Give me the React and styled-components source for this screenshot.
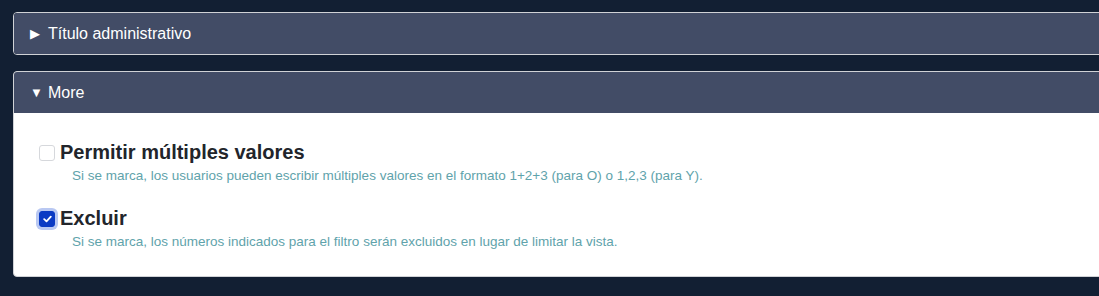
import React, { useState } from 'react';
import styled, { createGlobalStyle } from 'styled-components';

const GlobalStyle = createGlobalStyle`
  html, body {
    margin: 0;
    padding: 0;
    background-color: #121f33;
    overflow: hidden;
  }
  body {
    font-family: "Liberation Sans", Arial, sans-serif;
  }
`;

const Page = styled.div`
  padding: 12px 0 0 13px;
  display: flex;
  flex-direction: column;
  gap: 16px;
`;

const Panel = styled.details`
  width: 1100px;
  border: 1px solid #d0d2d6;
  border-radius: 4px;
  background-color: #ffffff;
  overflow: hidden;
`;

const Summary = styled.summary`
  list-style: none;
  display: flex;
  align-items: center;
  gap: 6px;
  height: 41px;
  padding: 0 0 0 16px;
  background-color: #424c66;
  color: #ffffff;
  font-size: 16px;
  cursor: pointer;

  &::-webkit-details-marker {
    display: none;
  }
`;

const Arrow = styled.span`
  font-size: 13px;
  width: 12px;
`;

const Body = styled.div`
  padding: 28px 24px 27px 24px;
  display: flex;
  flex-direction: column;
  gap: 24px;
`;

const Option = styled.div`
  display: flex;
  flex-direction: column;
`;

const OptionRow = styled.label`
  display: flex;
  align-items: center;
  gap: 5px;
  cursor: pointer;
`;

const Box = styled.span`
  box-sizing: border-box;
  width: 16px;
  height: 16px;
  margin-left: 1px;
  border-radius: 3px;
  border: 1px solid ${p => (p.checked ? '#0a3ac4' : '#d6d8dc')};
  background-color: ${p => (p.checked ? '#0a3ac4' : '#ffffff')};
  box-shadow: ${p => (p.checked ? '0 0 0 3px #b9c8f2' : 'none')};
  display: flex;
  align-items: center;
  justify-content: center;
`;

const Label = styled.span`
  font-size: 20px;
  font-weight: bold;
  color: #22252b;
`;

const Help = styled.div`
  margin: 4px 0 0 34px;
  font-size: 13.5px;
  color: #5fa3ab;
`;

const options = [
  {
    label: 'Permitir múltiples valores',
    help: 'Si se marca, los usuarios pueden escribir múltiples valores en el formato 1+2+3 (para O) o 1,2,3 (para Y).',
    checked: false,
  },
  {
    label: 'Excluir',
    help: 'Si se marca, los números indicados para el filtro serán excluidos en lugar de limitar la vista.',
    checked: true,
  },
];

const Check = () => (
  <svg width="9" height="8" viewBox="0 0 9 8">
    <path d="M1.2 4.2 L3.5 6.3 L7.8 1.6" fill="none" stroke="#ffffff" strokeWidth="1.8" strokeLinecap="round" strokeLinejoin="round" />
  </svg>
);

export default function App() {
  const [values, setValues] = useState(options.map(o => o.checked));

  const toggle = i => {
    const next = [...values];
    next[i] = !next[i];
    setValues(next);
  };

  return (
    <>
      <GlobalStyle />
      <Page>
        <Panel>
          <Summary>
            <Arrow>▶</Arrow>
            Título administrativo
          </Summary>
        </Panel>
        <Panel open>
          <Summary onClick={e => e.preventDefault()}>
            <Arrow>▼</Arrow>
            More
          </Summary>
          <Body>
            {options.map((o, i) => (
              <Option key={o.label}>
                <OptionRow onClick={() => toggle(i)}>
                  <Box checked={values[i]}>{values[i] && <Check />}</Box>
                  <Label>{o.label}</Label>
                </OptionRow>
                <Help>{o.help}</Help>
              </Option>
            ))}
          </Body>
        </Panel>
      </Page>
    </>
  );
}
